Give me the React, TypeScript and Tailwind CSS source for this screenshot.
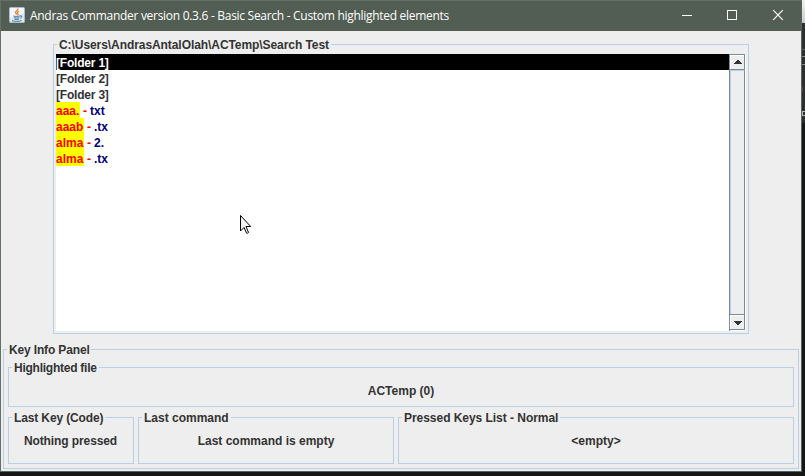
import type { ReactNode } from "react";

function TitledPanel({ title, titleClass, className, children }: { title: string; titleClass: string; className: string; children?: ReactNode }) {
  return (
    <section className={`relative border border-[#b8cfe5] ${className}`}>
      <h2 className={`absolute left-[3px] -top-[8px] h-4 whitespace-nowrap bg-[#eeeeee] pl-[2px] leading-4 ${titleClass}`}>{title}</h2>
      {children}
    </section>
  );
}

function JavaIcon() {
  return (
    <svg width="16" height="16" viewBox="0 0 16 16" className="ml-[8px] mt-[6px] shrink-0">
      <rect x="0.5" y="0.5" width="15" height="15" rx="1" fill="#dce7f0" stroke="#a9bccb" />
      <path d="M1 1h14v5L1 11z" fill="#f3f7fa" />
      <path d="M8.800 1.500c1 2-2.700 2.500-2.200 4.300.2.700.9 1.200 1.200 1.800M10.200 4.200c-2 .8-2.200 1.600-1.300 2.600.4.500 0 1-.3 1.300" fill="none" stroke="#e8791e" strokeWidth="1.200" />
      <path d="M4.300 9c1 .5 5 .5 6.700 0M5 10.700c1.500.5 4 .5 5.300 0M5.500 12.200c1.300.4 3 .4 4.300 0M11 9c2.500-.8 2.500 1.500.2 2.300M3 13.700c2.500.9 7.500.8 9.500-.2" fill="none" stroke="#43779c" strokeWidth="1" />
    </svg>
  );
}

function TitleBar() {
  return (
    <header className="flex h-[31px] shrink-0 border-t border-l border-[#646f65] bg-[#525d53] text-white">
      <JavaIcon />
      <h1 className="ml-[5px] w-[641px] shrink-0 whitespace-nowrap font-['Open_Sans','Noto_Sans',sans-serif] text-[12px] font-normal leading-[29px] tracking-[-0.29px]">
        Andras Commander version 0.3.6 - Basic Search - Custom highlighted elements
      </h1>
      <svg width="130" height="30" viewBox="671 1 130 30" shapeRendering="crispEdges" className="shrink-0" fill="none" stroke="white">
        <path d="M682 15.500h10M727.500 10.500h9v9h-9z" />
        <path d="M773.200 10.200l9.600 9.600M782.800 10.200l-9.600 9.600" shapeRendering="auto" strokeWidth="1.200" />
      </svg>
    </header>
  );
}

const folders = ["[Folder 1]", "[Folder 2]", "[Folder 3]"];
const files = [
  { name: "aaa.", ext: "txt" },
  { name: "aaab", ext: ".tx" },
  { name: "alma", ext: "2." },
  { name: "alma", ext: ".tx" },
];

function FileList() {
  return (
    <ul className="w-[673px] bg-white">
      {folders.map((folder, i) => (
        <li key={folder} className={`h-4 whitespace-nowrap leading-[18px] tracking-[-0.2px] ${i === 0 ? "bg-black text-white" : ""}`}>{folder}</li>
      ))}
      {files.map((file, i) => (
        <li key={i} className="flex h-4 whitespace-pre leading-[18px]">
          <span className={`h-4 bg-[#ffff00] text-[#ff0000] ${i === 0 ? "w-6" : "w-7"}`}>{file.name}</span>
          <span className="w-[10px] pl-[3px] text-[#ff0000]">-</span>
          <span className="text-[#000080]">{file.ext}</span>
        </li>
      ))}
    </ul>
  );
}

function ScrollBar() {
  return (
    <div className="flex w-[17px] flex-col border-r border-l border-r-white border-l-[#7a8a99]">
      <div className="flex h-[16px] flex-col border-t border-r border-b border-[#7a8a99]">
        <div className="flex h-full border-t border-l border-white pl-[3px] pt-[4px]">
          <svg width="8" height="4" viewBox="0 0 8 4" shapeRendering="crispEdges" fill="#333333"><path d="M3 0h2v1h1v1h1v1h1v1H0V3h1V2h1V1h1z" /></svg>
        </div>
      </div>
      <div className="flex-1 border-t border-r border-l border-t-[#b8cfe5] border-r-[#7a8a99] border-l-[#b8cfe5]" />
      <div className="flex h-[16px] flex-col border-t border-r border-b border-[#7a8a99]">
        <div className="flex h-full border-t border-l border-white pl-[3px] pt-[5px]">
          <svg width="8" height="4" viewBox="0 0 8 4" shapeRendering="crispEdges" fill="#333333"><path d="M0 0h8v1H7v1H6v1H5v1H3V3H2V2H1V1H0z" /></svg>
        </div>
      </div>
      <div className="h-px bg-white" />
    </div>
  );
}

function Pointer() {
  return (
    <svg width="12" height="20" viewBox="0 0 12 20" className="absolute left-[240px] top-[215px]">
      <path d="M.5.500v15.500l3.500-3.500 2.600 5.700q1.200.5 1.900-.8L6 11.500h4.700z" fill="#f3f3f3" stroke="black" strokeWidth="1" />
    </svg>
  );
}

export default function App() {
  return (
    <div className="relative flex h-[476px] w-[805px] overflow-hidden bg-[#151717] font-['Liberation_Sans',Arial,sans-serif] text-[12px] font-bold text-[#333333]">
      <div className="flex h-[472px] w-[802px] shrink-0 flex-col border-r border-b border-[#58645a] bg-[#eeeeee]">
        <TitleBar />
        <main className="flex flex-1 flex-col border-l border-[#646f65]">
          <TitledPanel title="C:\Users\AndrasAntalOlah\ACTemp\Search Test" titleClass="w-[274px] tracking-[-0.07px]" className="ml-[52px] mt-[13px] flex h-[290px] w-[696px] pl-[2px] pt-[9px] pb-[2px]">
            <FileList />
            <ScrollBar />
          </TitledPanel>
          <TitledPanel title="Key Info Panel" titleClass="w-[84px] tracking-[-0.15px]" className="ml-[2px] mt-[15px] h-[120px] w-[796px] pl-[4px] pt-[17px]">
            <TitledPanel title="Highlighted file" titleClass="w-[87px] tracking-[-0.25px]" className="h-[40px] w-[786px]">
              <p className="pt-[15px] text-center leading-4">ACTemp (0)</p>
            </TitledPanel>
            <div className="mt-[10px] flex gap-[4px]">
              <TitledPanel title="Last Key (Code)" titleClass="w-[93px] tracking-[-0.13px]" className="h-[47px] w-[126px]">
                <p className="whitespace-nowrap pt-[15px] pr-px text-center leading-4 tracking-[-0.1px]">Nothing pressed</p>
              </TitledPanel>
              <TitledPanel title="Last command" titleClass="w-[89px]" className="h-[47px] w-[256px]">
                <p className="pt-[15px] text-center leading-4">Last command is empty</p>
              </TitledPanel>
              <TitledPanel title="Pressed Keys List - Normal" titleClass="w-[158px] tracking-[-0.04px]" className="h-[47px] w-[396px]">
                <p className="pt-[15px] text-center leading-4">{"<empty>"}</p>
              </TitledPanel>
            </div>
          </TitledPanel>
        </main>
      </div>
      <aside className="w-[3px] shrink-0">
        <div className="h-[23px] bg-gradient-to-b from-[#f2f2f2] to-[#cccccc]" />
        <div className="h-[100px] bg-[#2b2f33] pt-[26px]">
          <div className="h-px bg-[#66675f]" />
          <div className="mt-[6px] h-px bg-[#8f8d7f]" />
          <div className="mt-[7px] h-px bg-[#8f8d7f]" />
          <div className="mt-[22px] h-[5px] w-px bg-[#633c31]" />
          <div className="mt-[19px] h-[5px] border border-r-0 border-[#b8b8a8]" />
        </div>
      </aside>
      <Pointer />
    </div>
  );
}
